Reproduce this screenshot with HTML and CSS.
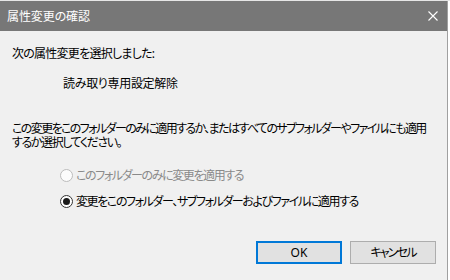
FILE: index.html
```html
<!DOCTYPE html>
<html lang="ja">
<head>
<meta charset="utf-8">
<link rel="stylesheet" href="styles.css">
</head>
<body>
<div class="backdrop"></div>
<div class="window">
  <div class="titlebar">
    <span class="title">属性変更の確認</span>
    <svg class="close" width="10" height="10" viewBox="0 0 10 10"><path d="M0.5 0.5 L9.5 9.5 M9.5 0.5 L0.5 9.5" stroke="#fff" stroke-width="1.1" fill="none"/></svg>
  </div>
  <div class="content">
    <p class="line t-mid">次の属性変更を選択しました:</p>
    <p class="line attr">読み取り専用設定解除</p>
    <div class="para">
      <p class="pline t-para">この変更をこのフォルダーのみに適用するか、またはすべてのサブフォルダーやファイルにも適用</p>
      <p class="pline t-kana">するか選択してください。</p>
    </div>
    <div class="options">
      <div class="option disabled"><span class="radio"></span><span class="t-kana">このフォルダーのみに変更を適用する</span></div>
      <div class="option"><span class="radio checked"></span><span class="t-kana">変更をこのフォルダー、サブフォルダーおよびファイルに適用する</span></div>
    </div>
    <div class="buttons">
      <div class="btn default">OK</div>
      <div class="btn"><span class="t-btn">キャンセル</span></div>
    </div>
  </div>
</div>
</body>
</html>
```
FILE: styles.css
```css
html, body {
  margin: 0;
  padding: 0;
  background: #ffffff;
  width: 450px;
  height: 280px;
  overflow: hidden;
}
body {
  font-family: "Noto Sans", "Noto Sans CJK JP", sans-serif;
  font-size: 12px;
  font-feature-settings: "palt";
  color: #000;
}
.backdrop {
  height: 1px;
  background: #e6e6e6;
}
.window {
  width: 447px;
  height: 279px;
  border-right: 1px solid #a0a0a0;
  background: #f0f0f0;
}
.titlebar {
  height: 30px;
  background: #777777;
  display: flex;
  align-items: center;
  justify-content: space-between;
  padding: 0 9px 0 7px;
  color: #fff;
}
.title {
  line-height: 15px;
  letter-spacing: -0.1px;
}
.close {
  display: block;
}
.content {
  padding: 15px 11px 0 12px;
}
.line, .pline {
  margin: 0;
  line-height: 15px;
  height: 15px;
  white-space: nowrap;
}
.pline {
  height: 14px;
}
.t-mid {
  letter-spacing: -0.75px;
}
.t-para {
  letter-spacing: -1.6px;
}
.t-kana {
  letter-spacing: -1.4px;
}
.t-btn {
  letter-spacing: -1.8px;
}
.attr {
  margin-top: 15px;
  padding-left: 51px;
  letter-spacing: -0.3px;
}
.para {
  margin-top: 30px;
}
.options {
  margin-top: 16px;
  padding-left: 48px;
  display: flex;
  flex-direction: column;
  gap: 6px;
}
.option {
  height: 20px;
  display: flex;
  align-items: center;
  gap: 3px;
  line-height: 15px;
}
.option.disabled {
  color: #8a8a8a;
}
.radio {
  width: 11px;
  height: 11px;
  border: 1px solid #333;
  border-radius: 50%;
  background: #fff;
  position: relative;
  flex: none;
}
.disabled .radio {
  border-color: #bcbcbc;
  background: #fcfcfc;
}
.radio.checked::after {
  content: "";
  position: absolute;
  left: 2px;
  top: 2px;
  width: 7px;
  height: 7px;
  border-radius: 50%;
  background: #1a1a1a;
}
.buttons {
  margin-top: 30px;
  display: flex;
  justify-content: flex-end;
  gap: 8px;
}
.btn {
  box-sizing: border-box;
  width: 86px;
  height: 23px;
  border: 1px solid #adadad;
  background: #e1e1e1;
  display: flex;
  align-items: center;
  justify-content: center;
  line-height: 15px;
}
.btn.default {
  border: 2px solid #0078d7;
}
```
